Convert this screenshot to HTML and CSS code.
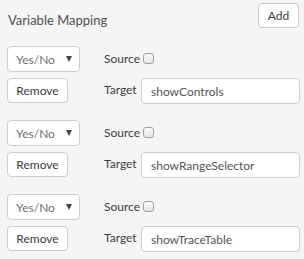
FILE: index.html
```html
<!DOCTYPE html>
<html lang="en">
<head>
    <meta charset="UTF-8">
    <meta name="viewport" content="width=device-width, initial-scale=1.0">
    <title>Variable Mapping</title>
    <link rel="stylesheet" href="styles.css">
</head>
<body>

    <header class="panel-header">
        <span class="panel-title">Variable Mapping</span>
        <button class="btn btn-add">Add</button>
    </header>

    <section class="mappings">
        <div class="mapping">
            <div class="mapping-left">
                <div class="select">
                    <span>Yes/No</span>
                    <span class="caret"></span>
                </div>
                <button class="btn btn-remove">Remove</button>
            </div>
            <div class="mapping-right">
                <label class="source">Source <span class="checkbox"></span></label>
                <div class="target">
                    <span class="target-label">Target</span>
                    <input class="target-input" type="text" value="showControls">
                </div>
            </div>
        </div>

        <div class="mapping">
            <div class="mapping-left">
                <div class="select">
                    <span>Yes/No</span>
                    <span class="caret"></span>
                </div>
                <button class="btn btn-remove">Remove</button>
            </div>
            <div class="mapping-right">
                <label class="source">Source <span class="checkbox"></span></label>
                <div class="target">
                    <span class="target-label">Target</span>
                    <input class="target-input" type="text" value="showRangeSelector">
                </div>
            </div>
        </div>

        <div class="mapping">
            <div class="mapping-left">
                <div class="select">
                    <span>Yes/No</span>
                    <span class="caret"></span>
                </div>
                <button class="btn btn-remove">Remove</button>
            </div>
            <div class="mapping-right">
                <label class="source">Source <span class="checkbox"></span></label>
                <div class="target">
                    <span class="target-label">Target</span>
                    <input class="target-input" type="text" value="showTraceTable">
                </div>
            </div>
        </div>
    </section>

</body>
</html>
```

FILE: styles.css
```css
body {
    background: #f5f5f5;
    color: #3c3c3c;
    font-family: Lato, "Open Sans", sans-serif;
    font-size: 12px;
    margin: 0;
    padding: 3px 4px 0 7px;
}

.panel-header {
    display: flex;
    justify-content: space-between;
    align-items: center;
    height: 25px;
}

.panel-title {
    font-size: 13px;
    color: #505050;
    padding-left: 1px;
    padding-top: 8px;
}

.btn {
    background: #fff;
    border: 1px solid #cdcdcd;
    border-radius: 4px;
    font-family: inherit;
    font-size: 12px;
    color: #3c3c3c;
    padding: 0 0 1px;
    height: 25px;
}

.btn-add {
    width: 41px;
    margin-right: 1px;
}

.mappings {
    margin-top: 18px;
}

.mapping {
    display: flex;
    margin-bottom: 16px;
}

.mapping-left {
    display: flex;
    flex-direction: column;
    align-items: flex-start;
    gap: 6px;
    width: 97px;
    flex-shrink: 0;
}

.select {
    display: flex;
    justify-content: space-between;
    align-items: center;
    box-sizing: border-box;
    width: 73px;
    height: 26px;
    background: #fff;
    border: 1px solid #cdcdcd;
    border-radius: 4px;
    padding: 0 7px 0 8px;
    color: #707070;
}

.caret {
    width: 0;
    height: 0;
    border-left: 3px solid transparent;
    border-right: 3px solid transparent;
    border-top: 6px solid #444;
}

.btn-remove {
    width: 61px;
}

.mapping-right {
    display: flex;
    flex-direction: column;
    gap: 6px;
    flex: 1;
    min-width: 0;
}

.source {
    display: flex;
    align-items: flex-start;
    height: 26px;
    padding-top: 5px;
    box-sizing: border-box;
}

.checkbox {
    display: inline-block;
    width: 9px;
    height: 9px;
    margin-left: 3px;
    margin-top: 2px;
    border: 1px solid #a0a0a0;
    border-radius: 3px;
    background: linear-gradient(#fafafa, #e6e6e6);
}

.target {
    display: flex;
    align-items: center;
}

.target-label {
    width: 37px;
    flex-shrink: 0;
    padding-bottom: 3px;
}

.target-input {
    flex: 1;
    min-width: 0;
    box-sizing: border-box;
    height: 26px;
    border: 1px solid #cdcdcd;
    border-radius: 4px;
    background: #fff;
    font-family: inherit;
    font-size: 12px;
    color: #555;
    padding: 0 9px;
    margin: 0;
    outline: none;
}
```
